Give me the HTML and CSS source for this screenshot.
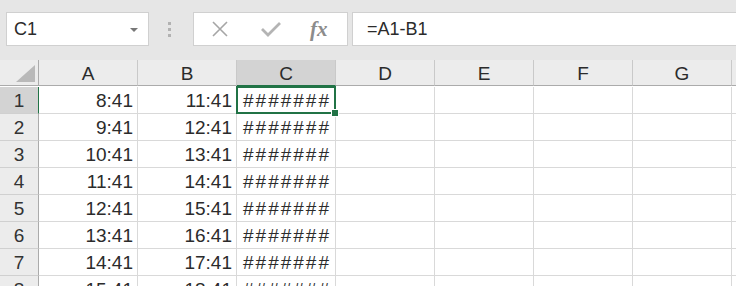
FILE: index.html
```html
<!DOCTYPE html>
<html lang="en">
<head>
<meta charset="UTF-8">
<title>Sheet1</title>
<link rel="stylesheet" href="styles.css">
</head>
<body>
<div class="toolbar">
    <div class="namebox">
        <span>C1</span>
        <span class="caret"></span>
    </div>
    <div class="grip"><i></i><i></i><i></i></div>
    <div class="fxbox">
        <svg class="icon" width="20" height="20" viewBox="0 0 20 20">
            <path d="M3 3 L17 17 M17 3 L3 17" stroke="#a6a6a6" stroke-width="1.6" fill="none"/>
        </svg>
        <svg class="icon" width="22" height="20" viewBox="0 0 22 20">
            <path d="M2 10 L8 16 L20 4" stroke="#b4b4b4" stroke-width="2.8" fill="none"/>
        </svg>
        <span class="fx">fx</span>
    </div>
    <div class="formula">=A1-B1</div>
</div>

<div class="sheet">
    <div class="corner"><span class="tri"></span></div>
    <div class="colhead">A</div>
    <div class="colhead">B</div>
    <div class="colhead active">C</div>
    <div class="colhead">D</div>
    <div class="colhead">E</div>
    <div class="colhead">F</div>
    <div class="colhead">G</div>
    <div class="colhead"></div>
</div>
<div class="sheet" id="rows"></div>

<script>
const times = [[8, 11], [9, 12], [10, 13], [11, 14], [12, 15], [13, 16], [14, 17], [15, 18]];

document.getElementById("rows").innerHTML = times.map((t, i) => `
    <div class="rowhead ${i === 0 ? 'active' : ''}">${i + 1}</div>
    <div class="cell num">${t[0]}:41</div>
    <div class="cell num">${t[1]}:41</div>
    <div class="cell hash ${i === 0 ? 'selected' : ''}">#######</div>
    <div class="cell"></div>
    <div class="cell"></div>
    <div class="cell"></div>
    <div class="cell"></div>
    <div class="cell"></div>
`).join('');
</script>
</body>
</html>
```

FILE: styles.css
```css
body {
    margin: 0;
    font-family: 'Liberation Sans', Arial, sans-serif;
    color: #2b2b2b;
    background: #fff;
    overflow: hidden;
}
.toolbar {
    display: flex;
    align-items: center;
    height: 60px;
    padding: 0 0 2px 6px;
    background-color: #e6e6e6;
    box-sizing: border-box;
}
.namebox, .fxbox, .formula {
    height: 34px;
    box-sizing: border-box;
    background: #fff;
    border: 1px solid #d0d0d0;
    display: flex;
    align-items: center;
}
.namebox {
    width: 143px;
    padding: 0 10px 0 7px;
    justify-content: space-between;
    font-size: 18px;
}
.caret {
    width: 0;
    height: 0;
    border-left: 4px solid transparent;
    border-right: 4px solid transparent;
    border-top: 4px solid #777;
    margin-top: 1px;
}
.grip {
    width: 44px;
    display: flex;
    flex-direction: column;
    align-items: center;
    gap: 3px;
    padding-right: 4px;
    box-sizing: border-box;
}
.grip i {
    width: 3px;
    height: 3px;
    background: #b2b2b2;
    display: block;
}
.fxbox {
    width: 155px;
    padding: 0 0 0 16px;
    gap: 30px;
}
.fx {
    font-family: 'Liberation Serif', serif;
    font-style: italic;
    font-weight: bold;
    font-size: 21px;
    color: #8c8c8c;
    margin-left: -2px;
}
.formula {
    flex: 1;
    margin-left: 4px;
    border-right: none;
    padding-left: 14px;
    font-size: 18px;
}
.sheet {
    display: grid;
    grid-template-columns: 39px repeat(7, 99px) 40px;
    grid-auto-rows: 27px;
}
.corner, .colhead {
    height: 26px;
    box-sizing: border-box;
    background: #ececec;
    border-right: 1px solid #c9c9c9;
    border-bottom: 1px solid #ababab;
}
.corner {
    position: relative;
    border-right: 1px solid #ababab;
}
.tri {
    position: absolute;
    right: 3px;
    bottom: 3px;
    width: 0;
    height: 0;
    border-left: 19px solid transparent;
    border-bottom: 17px solid #b9b9b9;
}
.colhead {
    font-size: 19px;
    text-align: center;
    line-height: 27px;
}
.colhead.active {
    background: #d3d3d3;
    border-bottom-color: #217346;
}
.rowhead {
    background: #ececec;
    border-right: 1px solid #ababab;
    border-bottom: 1px solid #d0d0d0;
    font-size: 19px;
    text-align: center;
    line-height: 27px;
    box-sizing: border-box;
    color: #333;
}
.rowhead.active {
    background: #d3d3d3;
    border-right-color: #217346;
}
.cell {
    box-sizing: border-box;
    border-right: 1px solid #d9d9d9;
    border-bottom: 1px solid #d9d9d9;
    font-size: 19px;
    line-height: 27px;
    padding: 0 4px;
    white-space: nowrap;
}
.num {
    text-align: right;
}
.hash {
    letter-spacing: 2px;
    padding-left: 6px;
}
.selected {
    position: relative;
}
.selected::after {
    content: "";
    position: absolute;
    left: -1px;
    top: -1px;
    right: -1px;
    bottom: -1px;
    border: 2px solid #217346;
}
.selected::before {
    content: "";
    position: absolute;
    right: -4px;
    bottom: -4px;
    width: 6px;
    height: 6px;
    background: #217346;
    border: 1px solid #fff;
    z-index: 1;
}
```
